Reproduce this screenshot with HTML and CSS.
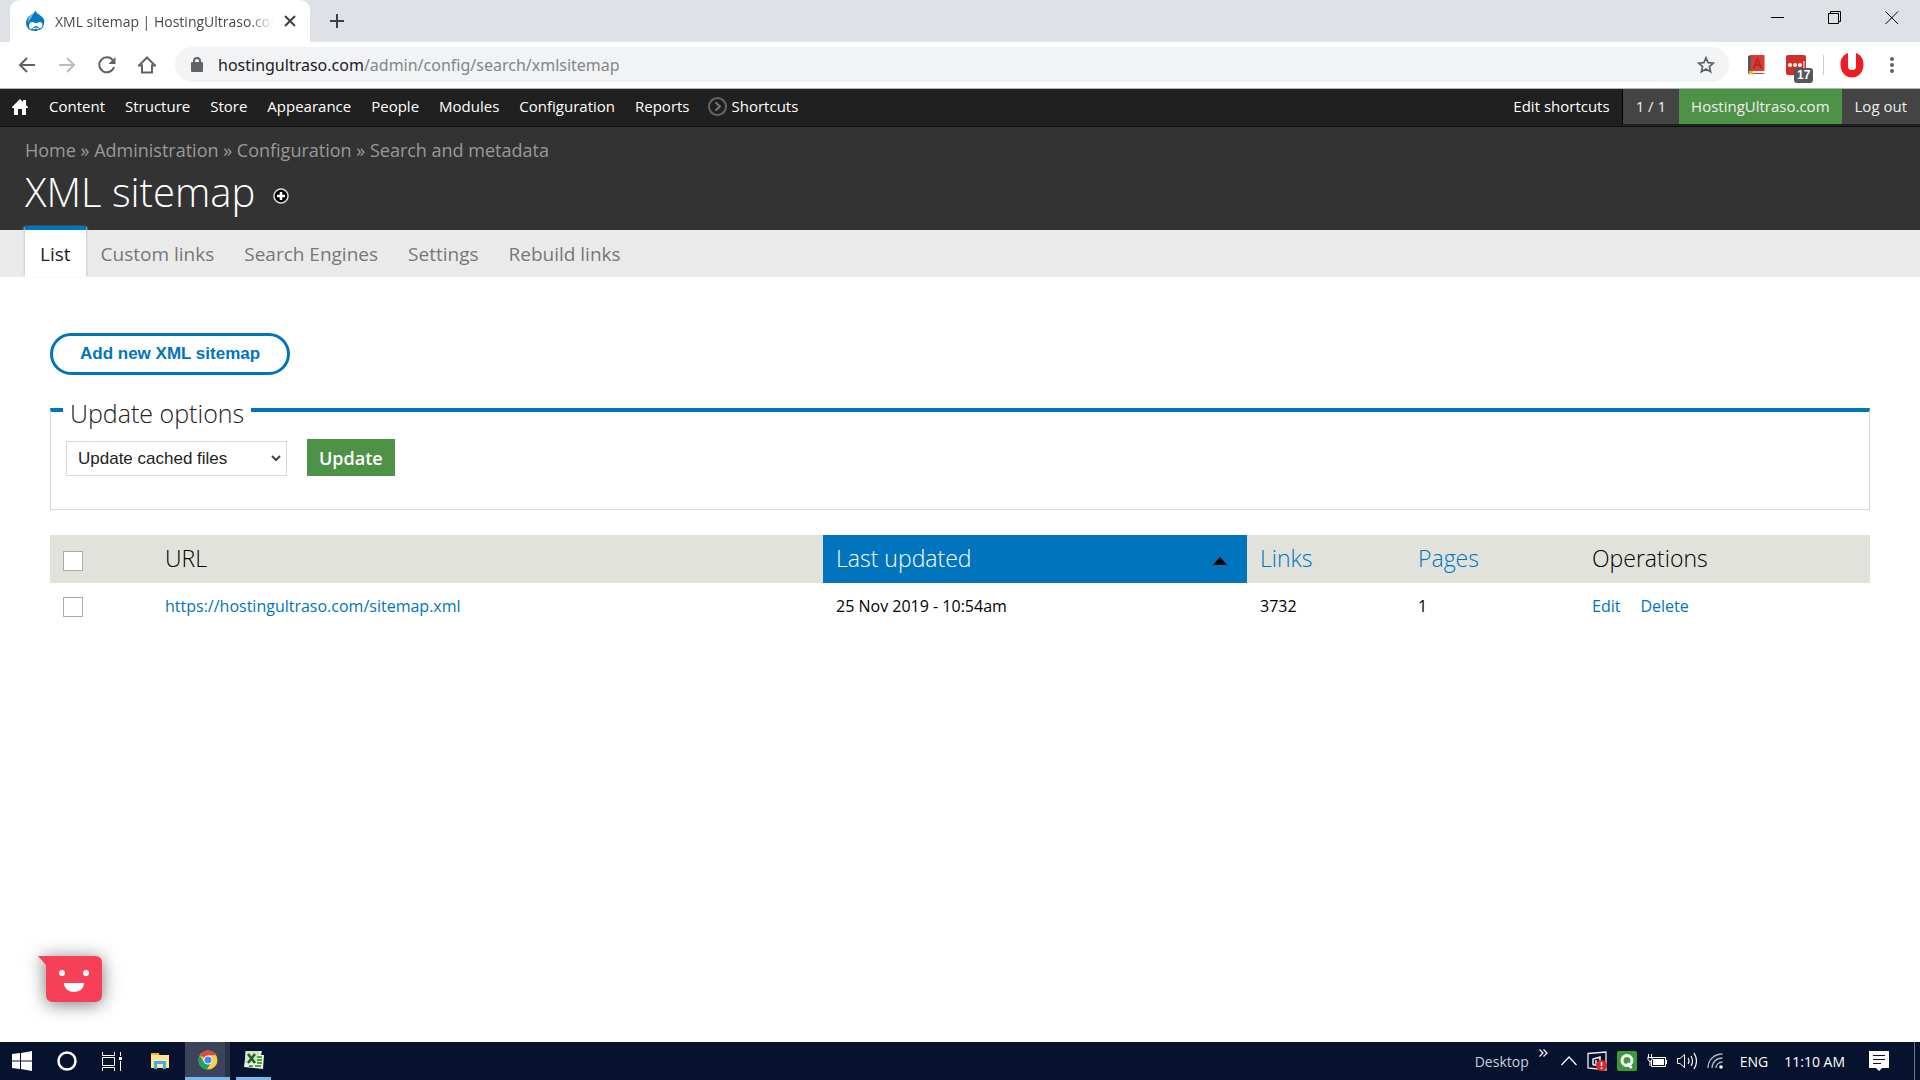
FILE: index.html
```html
<!DOCTYPE html>
<html lang="en">

<head>
    <meta charset="UTF-8">
    <meta name="viewport" content="width=device-width, initial-scale=1.0">
    <title>XML sitemap | HostingUltraso.com</title>
    <link rel="stylesheet" href="styles.css">
</head>

<body>
    <!-- browser tabs -->
    <div class="tab-strip">
        <div class="tab">
            <svg class="favicon" width="20" height="22" viewBox="0 0 20 22">
                <path d="M10 0C11 3 14 4 16 6C19 8 20 11 19 14C18 19 14 21 10 21C5 21 1 18 1 13C1 9 3 7 6 5C8 4 10 3 10 0Z" fill="#0678be" />
                <path d="M8 3C5 6 2 8 3 13C4 9 8 8 8 3Z" fill="#6db8e6" />
                <path d="M4 16C4 12 7 11 10 13C12 14 13 12 15 12C18 12 18 16 16 18C14 19 13 16 11 16C9 16 8 19 6 19C5 19 4 18 4 16Z" fill="#fff" />
                <path d="M8 19Q11 17 14 19" fill="none" stroke="#fff" />
            </svg>
            <span class="tab-title">XML sitemap | HostingUltraso.com</span>
            <button class="plain" aria-label="Close tab">
                <svg width="12" height="12" viewBox="0 0 12 12">
                    <path d="M1 1L11 11M11 1L1 11" stroke="#3c4043" stroke-width="2" />
                </svg>
            </button>
        </div>
        <button class="plain new-tab" aria-label="New tab">
            <svg width="16" height="16" viewBox="0 0 16 16">
                <path d="M8 1V15M1 8H15" stroke="#3c4043" stroke-width="2" />
            </svg>
        </button>
        <div class="window-buttons">
            <button class="plain" aria-label="Minimize">
                <svg width="14" height="14" viewBox="0 0 14 14">
                    <path d="M0 6.5H13" stroke="#000" />
                </svg>
            </button>
            <button class="plain" aria-label="Restore">
                <svg width="14" height="14" viewBox="0 0 14 14">
                    <path d="M.5 2.5H10.5V12.5H.5ZM2.5 2V.5H12.5V10.5H11" fill="none" stroke="#000" />
                </svg>
            </button>
            <button class="plain" aria-label="Close">
                <svg width="14" height="14" viewBox="0 0 14 14">
                    <path d="M.5 .5L13 13M13 .5L.5 13" stroke="#000" />
                </svg>
            </button>
        </div>
    </div>

    <!-- address bar -->
    <div class="address-bar">
        <div class="nav-buttons">
            <button class="plain" aria-label="Back">
                <svg width="18" height="18" viewBox="0 0 18 18">
                    <path d="M17 9H2M9 2L2 9L9 16" fill="none" stroke="#5f6368" stroke-width="2" />
                </svg>
            </button>
            <button class="plain" aria-label="Forward">
                <svg width="18" height="18" viewBox="0 0 18 18">
                    <path d="M1 9H16M9 2L16 9L9 16" fill="none" stroke="#babcbe" stroke-width="2" />
                </svg>
            </button>
            <button class="plain" aria-label="Reload">
                <svg width="18" height="18" viewBox="0 0 18 18">
                    <path d="M15 4.5A7.5 7.5 0 1 0 16 11" fill="none" stroke="#5f6368" stroke-width="2" />
                    <path d="M17.5 1V8H10.5Z" fill="#5f6368" />
                </svg>
            </button>
            <button class="plain" aria-label="Home">
                <svg width="18" height="18" viewBox="0 0 18 18">
                    <path d="M1 9.5L9 1.5L17 9.5H14V16.5H4V9.5Z" fill="none" stroke="#5f6368" stroke-width="2" />
                </svg>
            </button>
        </div>
        <div class="url-box">
            <svg width="12" height="16" viewBox="0 0 12 16">
                <path d="M3 7V4A3 3 0 0 1 9 4V7" fill="none" stroke="#5f6368" stroke-width="2" />
                <rect x="0" y="5" width="12" height="10" rx="1" fill="#5f6368" />
            </svg>
            <span class="url">hostingultraso.com<span>/admin/config/search/xmlsitemap</span></span>
            <button class="plain" aria-label="Bookmark this page">
                <svg width="18" height="18" viewBox="0 0 18 18">
                    <path d="M9 1.8L11.1 6.6L16.4 7.1L12.4 10.6L13.6 15.8L9 13L4.4 15.8L5.6 10.6L1.6 7.1L6.9 6.6Z" fill="none" stroke="#5f6368" stroke-width="1.7" />
                </svg>
            </button>
        </div>
        <div class="extensions">
            <button class="plain" aria-label="Dictionary">
                <svg width="18" height="20" viewBox="0 0 18 20">
                    <path d="M3 0H17.5V16H3ZM4 18H17.5V19H4Z" fill="#dc3c34" />
                    <path d="M1 1L4 0V16L1 19Z" fill="#525c60" />
                    <path d="M10.5 3.5L6.5 13.5M10.5 3.5L14.5 13.5M8 10H13" stroke="#b12a25" stroke-width="2" />
                    <path d="M2 16H6V20L4 19L2 20Z" fill="#f9b719" />
                </svg>
            </button>
            <button class="plain password" aria-label="Passwords">
                <svg width="20" height="20" viewBox="0 0 20 20">
                    <rect width="20" height="20" rx="2" fill="#d32d27" />
                    <circle cx="4" cy="10" r="2" fill="#fff" />
                    <circle cx="9" cy="10" r="2" fill="#fff" />
                    <circle cx="14" cy="10" r="2" fill="#fff" />
                    <path d="M18 6V14" stroke="#fff" />
                </svg>
                <span class="count">17</span>
            </button>
            <span class="divider"></span>
            <button class="plain" aria-label="Profile">
                <svg width="24" height="26" viewBox="0 0 24 26">
                    <path d="M8 1C3 3 .5 7 .5 12C.5 20 5 25.5 12 25.5S23.5 20 23.5 12C23.5 7 21 3 16 1V15Q16 18 12 18T8 15Z" fill="#ee1c25" />
                </svg>
            </button>
            <button class="plain" aria-label="Menu">
                <svg width="4" height="18" viewBox="0 0 4 18">
                    <circle cx="2" cy="3" r="2" fill="#5f6368" />
                    <circle cx="2" cy="9" r="2" fill="#5f6368" />
                    <circle cx="2" cy="15" r="2" fill="#5f6368" />
                </svg>
            </button>
        </div>
    </div>

    <!-- admin menu -->
    <nav class="admin-menu">
        <a href="#" class="home" aria-label="Home">
            <svg width="16" height="16" viewBox="0 0 16 16">
                <path d="M8 0L11 3V1H14V6L16 8V9H14V16H10V10H6V16H2V9H0V8Z" fill="#fff" />
            </svg>
        </a>
        <a href="#">Content</a>
        <a href="#">Structure</a>
        <a href="#">Store</a>
        <a href="#">Appearance</a>
        <a href="#">People</a>
        <a href="#">Modules</a>
        <a href="#">Configuration</a>
        <a href="#">Reports</a>
        <a href="#" class="shortcuts">
            <svg width="19" height="19" viewBox="0 0 19 19">
                <circle cx="9.5" cy="9.5" r="8.5" fill="none" stroke="#666" stroke-width="2" />
                <path d="M7.5 5.5L12 9.5L7.5 13.5" fill="none" stroke="#777" stroke-width="2" />
            </svg>
            Shortcuts
        </a>
        <div class="account">
            <a href="#" class="edit">Edit shortcuts</a>
            <a href="#" class="grey">1 / 1</a>
            <a href="#" class="green">HostingUltraso.com</a>
            <a href="#" class="grey">Log out</a>
        </div>
    </nav>

    <header class="branding">
        <div class="breadcrumb">
            <a href="#">Home</a> » <a href="#">Administration</a> » <a href="#">Configuration</a> » <a href="#">Search and metadata</a>
        </div>
        <div class="title-row">
            <h1>XML sitemap</h1>
            <a href="#" class="add-shortcut" aria-label="Add to shortcuts">
                <svg width="16" height="16" viewBox="0 0 16 16">
                    <circle cx="8" cy="8" r="7" fill="#000" stroke="#ddd" stroke-width="1.5" />
                    <path d="M8 4V12M4 8H12" stroke="#fff" stroke-width="2.5" />
                </svg>
            </a>
        </div>
    </header>
    <nav class="primary-tabs">
        <a href="#" class="active">List</a>
        <a href="#">Custom links</a>
        <a href="#">Search Engines</a>
        <a href="#">Settings</a>
        <a href="#">Rebuild links</a>
    </nav>

    <main>
        <button class="add-button">Add new XML sitemap</button>

        <fieldset>
            <legend>Update options</legend>
            <div class="options">
                <div class="select">
                    <select aria-label="Update options">
                        <option>Update cached files</option>
                    </select>
                    <svg width="10" height="7" viewBox="0 0 10 7">
                        <path d="M1 1L5 5L9 1" fill="none" stroke="#444" stroke-width="2" />
                    </svg>
                </div>
                <button class="update">Update</button>
            </div>
        </fieldset>

        <table>
            <colgroup>
                <col class="col-check">
                <col>
                <col class="col-date">
                <col class="col-links">
                <col class="col-pages">
                <col class="col-operations">
            </colgroup>
            <thead>
                <tr>
                    <th><input type="checkbox" aria-label="Select all rows"></th>
                    <th>URL</th>
                    <th class="sorted">
                        <a href="#">Last updated
                            <svg width="14" height="8" viewBox="0 0 14 8">
                                <path d="M0 8L7 0L14 8Z" fill="#000" />
                            </svg>
                        </a>
                    </th>
                    <th><a href="#">Links</a></th>
                    <th><a href="#">Pages</a></th>
                    <th>Operations</th>
                </tr>
            </thead>
            <tbody>
                <tr>
                    <td><input type="checkbox" aria-label="Select sitemap.xml"></td>
                    <td><a href="#">https://hostingultraso.com/sitemap.xml</a></td>
                    <td>25 Nov 2019 - 10:54am</td>
                    <td>3732</td>
                    <td>1</td>
                    <td>
                        <div class="operations"><a href="#">Edit</a><a href="#">Delete</a></div>
                    </td>
                </tr>
            </tbody>
        </table>

        <button class="plain chat" aria-label="Open chat">
            <svg width="64" height="46" viewBox="0 0 64 46">
                <path d="M0 0H57Q64 0 64 7V39Q64 46 57 46H15Q8 46 8 39V9Z" fill="#f64058" />
                <circle cx="24" cy="17" r="3" fill="#fff" />
                <circle cx="48" cy="17" r="3" fill="#fff" />
                <path d="M26 27H46C46 32 42 36 36 36S26 32 26 27Z" fill="#fff" />
            </svg>
        </button>
    </main>

    <!-- taskbar -->
    <footer class="taskbar">
        <button class="plain task start" aria-label="Start">
            <svg width="20" height="20" viewBox="0 0 20 20">
                <path d="M0 3L8 2V9.5H0ZM9 2L20 0V9.5H9ZM0 10.5H8V18L0 17ZM9 10.5H20V20L9 18Z" fill="#fff" />
            </svg>
        </button>
        <button class="plain task" aria-label="Search">
            <svg width="20" height="20" viewBox="0 0 20 20">
                <circle cx="10" cy="10" r="8.5" fill="none" stroke="#fff" stroke-width="2.5" />
            </svg>
        </button>
        <button class="plain task" aria-label="Task view">
            <svg width="20" height="20" viewBox="0 0 20 20">
                <path d="M.5 1V4.5H12.5V1M.5 6.5H12.5V14.5H.5ZM.5 20V16.5H12.5V20M18.5 1V5M18.5 10V20" fill="none" stroke="#fff" />
                <rect x="17" y="6" width="3" height="3" fill="#fff" />
            </svg>
        </button>
        <button class="plain task wide" aria-label="File Explorer">
            <svg width="18" height="17" viewBox="0 0 18 17">
                <path d="M0 1H7L9 2H18V15H0Z" fill="#ffe494" />
                <path d="M0 0H8V2H0Z" fill="#f0b429" />
                <path d="M3 16V8H15V16H12V11H6V16Z" fill="#3db1e6" />
            </svg>
        </button>
        <button class="plain task current" aria-label="Chrome">
            <svg width="20" height="20" viewBox="0 0 20 20">
                <circle cx="10" cy="10" r="9.5" fill="#fbd14b" />
                <path d="M10 10L1.8 5.2A9.5 9.5 0 0 1 18.2 5.2H10Z" fill="#dd4b3e" />
                <path d="M1.8 5.2A9.5 9.5 0 0 0 9 19.45L13 12.5L6 12Z" fill="#1da462" />
                <circle cx="10" cy="10" r="4.5" fill="#fff" />
                <circle cx="10" cy="10" r="3.5" fill="#4688f1" />
            </svg>
        </button>
        <button class="plain task running" aria-label="Excel">
            <svg width="20" height="18" viewBox="0 0 20 18">
                <path d="M2 0H18L17 4H20L19 18L0 16Z" fill="#e9f3e4" />
                <path d="M1.5 0H15V12H1Z" fill="#cfe6c3" />
                <path d="M4 3L11 12M11 3L4 12" stroke="#1f5d2b" stroke-width="2.5" />
                <path d="M13 6H18M13 9H18M13 12H18M5 15H9M11 15H17" stroke="#55a048" stroke-width="2" />
            </svg>
        </button>

        <div class="tray">
            <span class="desktop">Desktop</span>
            <svg class="raised" width="9" height="8" viewBox="0 0 9 8">
                <path d="M.5 .5L4 4L.5 7.5M4.5 .5L8 4L4.500 7.5" fill="none" stroke="#fff" stroke-width="1.2" />
            </svg>
            <svg class="chevron" width="16" height="10" viewBox="0 0 16 10">
                <path d="M.5 9L8 1L15.5 9" fill="none" stroke="#fff" stroke-width="1.2" />
            </svg>
            <svg width="20" height="20" viewBox="0 0 20 20">
                <path d="M1 2.5L19 1V19L1 17Z" fill="none" stroke="#eee" stroke-width="1.3" />
                <path d="M6 14V8L13 6V11M9 9V14H6" fill="none" stroke="#eee" stroke-width="1.5" />
                <circle cx="14.5" cy="14.5" r="5.5" fill="#d92b2b" />
                <path d="M14.5 11V15M14.5 16.5V18" stroke="#fff" stroke-width="1.5" />
            </svg>
            <svg width="20" height="20" viewBox="0 0 20 20">
                <rect width="20" height="20" rx="2" fill="#3c9a3a" />
                <circle cx="10" cy="9.5" r="5" fill="none" stroke="#fff" stroke-width="3" />
                <path d="M10.5 12L14.5 17" stroke="#fff" stroke-width="2.5" />
            </svg>
            <svg width="20" height="14" viewBox="0 0 20 14">
                <path d="M4.5 3.5H18.5V12.5H4.5Z" fill="none" stroke="#fff" />
                <path d="M6 5H17V11H6ZM19 6H20V10H19Z" fill="#fff" />
                <path d="M1.5 0V3M4.5 0V3M.5 3.5H5V6L3 7.5L1 6V3.5M3 7V12" fill="#06122e" stroke="#fff" />
            </svg>
            <svg width="20" height="18" viewBox="0 0 20 18">
                <path d="M.5 6.5H3L7.5 2.5V15.5L3 11.5H.5Z" fill="none" stroke="#fff" />
                <path d="M11 6Q13 9 11 12M14 4Q17 9 14 14M17 1Q22 9 17 17" fill="none" stroke="#fff" stroke-width="1.2" />
            </svg>
            <svg width="16" height="16" viewBox="0 0 16 16">
                <path d="M1 15C1 7 7 1 15.5 1M5 15C5 9.5 9 5 15.5 5M9 15C9 12 11.5 9 15.5 9" fill="none" stroke="#aeb4c0" stroke-width="1.3" />
                <circle cx="14" cy="14" r="1.8" fill="#fff" />
            </svg>
            <span class="lang">ENG</span>
            <span class="clock">11:10 AM</span>
            <svg width="20" height="20" viewBox="0 0 20 20">
                <path d="M0 0H20V17H13L10 20L7 17H0Z" fill="#fff" />
                <path d="M4 4.5H16M4 8.5H16M4 12.5H12" stroke="#06122e" />
            </svg>
        </div>
        <button class="plain show-desktop" aria-label="Show desktop"></button>
    </footer>
</body>

</html>
```

FILE: styles.css
```css
* {
    box-sizing: border-box;
}

body {
    margin: 0;
    min-height: 100vh;
    display: flex;
    flex-direction: column;
    background-color: white;
    color: #000;
    font-family: "Open Sans", sans-serif;
    font-size: 16px;
}

a {
    color: #0074bd;
    text-decoration: none;
}

svg {
    display: block;
    flex: none;
}

.plain {
    display: flex;
    padding: 0;
    border: 0;
    background: none;
}

/* browser */
.tab-strip {
    display: flex;
    align-items: center;
    height: 42px;
    padding-left: 10px;
    background-color: #dee1e6;
}

.tab {
    display: flex;
    align-items: center;
    gap: 10px;
    width: 300px;
    height: 42px;
    padding: 0 14px 0 15px;
    border-radius: 10px 10px 0 0;
    background-color: white;
}

.tab-title {
    flex: 1;
    overflow: hidden;
    white-space: nowrap;
    font-size: 14px;
    color: #45494d;
    -webkit-mask-image: linear-gradient(to right, #000 88%, transparent);
    mask-image: linear-gradient(to right, #000 88%, transparent);
}

.new-tab {
    margin-left: 19px;
}

.window-buttons {
    display: flex;
    gap: 43px;
    margin-left: auto;
    padding: 0 21px 6px 0;
}

.address-bar {
    display: flex;
    align-items: center;
    height: 47px;
    padding: 0 26px 1px 18px;
    border-bottom: 1px solid #b4b4b4;
}

.nav-buttons {
    display: flex;
    gap: 22px;
}

.url-box {
    flex: 1;
    display: flex;
    align-items: center;
    gap: 15px;
    height: 35px;
    margin-left: 19px;
    padding: 0 14px 0 16px;
    border-radius: 18px;
    background-color: #f1f3f4;
}

.url {
    flex: 1;
    color: #202124;
    font-family: "Noto Sans", sans-serif;
}

.url span {
    color: #80868b;
}

.extensions {
    display: flex;
    align-items: center;
    margin-left: 18px;
}

.password {
    position: relative;
    margin: 0 17px 0 21px;
}

.count {
    position: absolute;
    left: 8px;
    top: 13px;
    padding: 0 3px;
    border-radius: 3px;
    background-color: #54585c;
    color: white;
    font-size: 12px;
    font-weight: 700;
    line-height: 15px;
}

.divider {
    width: 1px;
    height: 20px;
    margin-right: 16px;
    background-color: #ccc;
}

.extensions button:last-child {
    margin-left: 26px;
}

/* admin menu */
.admin-menu {
    display: flex;
    height: 38px;
    padding-bottom: 2px;
    border-bottom: 1px solid #111;
    background-color: #202020;
    font-size: 15px;
    line-height: 35px;
}

.admin-menu a {
    padding: 0 10px;
    color: white;
}

.admin-menu .home {
    display: flex;
    align-items: center;
    padding: 0 11px 0 12px;
}

.admin-menu .shortcuts {
    display: flex;
    align-items: center;
    gap: 5px;
    padding-left: 8px;
}

.account {
    display: flex;
    margin-left: auto;
}

.admin-menu .edit {
    padding-right: 12px;
    border-right: 1px solid #000;
}

.account .grey {
    padding: 0 13px;
    background-color: #444;
    color: #eee;
}

.account .green {
    padding: 0 12px;
    background-color: #4e9248;
    color: #eee;
}

/* page header */
.branding {
    padding: 9px 25px 10px;
    background-color: #333;
    color: #999;
}

.breadcrumb {
    font-size: 18px;
    line-height: 28px;
}

.breadcrumb a {
    color: #999;
}

.title-row {
    display: flex;
    align-items: center;
    gap: 18px;
}

h1 {
    margin: 0;
    color: white;
    font-size: 40px;
    font-weight: 300;
    line-height: 56px;
}

.add-shortcut {
    padding-top: 8px;
}

.primary-tabs {
    display: flex;
    height: 47px;
    padding-left: 25px;
    background-color: #eaeaea;
    font-size: 19px;
    line-height: 48px;
}

.primary-tabs a {
    padding: 0 15px;
    color: #777;
}

.primary-tabs .active {
    margin-top: -4px;
    border-top: 4px solid #0074bd;
    background-color: white;
    box-shadow: 2px 0 2px -1px #ccc, -2px 0 2px -1px #ccc;
    color: #222;
}

/* content */
main {
    flex: 1;
    position: relative;
    padding: 56px 50px 0;
}

.add-button {
    display: block;
    height: 42px;
    padding: 0 27px;
    border: 3px solid #0074bd;
    border-radius: 21px;
    background-color: white;
    color: #0074bd;
    font-family: "Liberation Sans", Arial, sans-serif;
    font-size: 17px;
    font-weight: 700;
}

fieldset {
    margin: 17px 0 25px;
    padding: 11px 15px 33px;
    border: 1px solid #d8d8d8;
    border-top: 4px solid #0074bd;
}

legend {
    margin-left: -3px;
    padding: 6px 7px 0;
    color: #222;
    font-size: 25px;
    font-weight: 300;
    line-height: 30px;
}

.options {
    display: flex;
    align-items: flex-end;
    gap: 20px;
}

.select {
    display: grid;
    align-items: center;
    width: 221px;
}

.select > * {
    grid-area: 1 / 1;
}

.select svg {
    justify-self: end;
    margin-right: 6px;
    pointer-events: none;
}

select {
    appearance: none;
    height: 35px;
    padding: 0 11px;
    border: 1px solid #d8d8d8;
    border-radius: 0;
    background-color: white;
    color: #222;
    font-family: "Liberation Sans", Arial, sans-serif;
    font-size: 17px;
}

.update {
    height: 37px;
    padding: 0 12px;
    border: 0;
    background-color: #4e9248;
    color: white;
    font-family: inherit;
    font-size: 18px;
    font-weight: 600;
}

table {
    width: 100%;
    border-collapse: collapse;
    table-layout: fixed;
    line-height: 24px;
}

.col-check {
    width: 102px;
}

.col-date {
    width: 424px;
}

.col-links {
    width: 158px;
}

.col-pages {
    width: 174px;
}

.col-operations {
    width: 291px;
}

th {
    height: 48px;
    padding: 0 13px 2px;
    background-color: #e1e2dc;
    text-align: left;
    font-size: 23px;
    font-weight: 300;
}

td {
    height: 46px;
    padding: 0 13px;
}

th.sorted {
    background-color: #0074bd;
}

.sorted a {
    display: flex;
    justify-content: space-between;
    align-items: center;
    padding-right: 7px;
    color: white;
}

.sorted svg {
    margin-top: 6px;
}

input[type="checkbox"] {
    appearance: none;
    display: block;
    width: 20px;
    height: 20px;
    margin: 2px 0 0;
    border: 1px solid #aaa;
    background-color: white;
}

th input[type="checkbox"] {
    margin-top: 6px;
}

input[type="checkbox"]:checked {
    background-color: #0074bd;
}

.operations {
    display: flex;
    gap: 20px;
}

.chat {
    position: absolute;
    left: 38px;
    bottom: 40px;
    filter: drop-shadow(0 2px 9px #777);
}

/* taskbar */
.taskbar {
    display: flex;
    height: 38px;
    background-color: #06122e;
    color: white;
}

.task {
    align-items: center;
    justify-content: center;
    width: 45px;
}

.task.start {
    width: 44px;
}

.task.wide {
    width: 51px;
}

.task.current {
    border-bottom: 3px solid #76b9ed;
    background-color: #3b445a;
    box-shadow: inset -5px 0 #2b3347;
}

.task.running {
    width: 35px;
    margin-left: 6px;
    border-bottom: 3px solid #76b9ed;
}

.tray {
    display: flex;
    align-items: center;
    gap: 10px;
    margin-left: auto;
    padding-right: 25px;
    font-size: 14px;
}

.tray .desktop {
    color: #ccd0d8;
}

.raised {
    margin-bottom: 16px;
}

.chevron {
    margin-left: 3px;
}

.lang {
    margin: 0 6px 0 7px;
}

.clock {
    margin-right: 14px;
}

.show-desktop {
    width: 6px;
    border-left: 1px solid #6a7283;
}
```
